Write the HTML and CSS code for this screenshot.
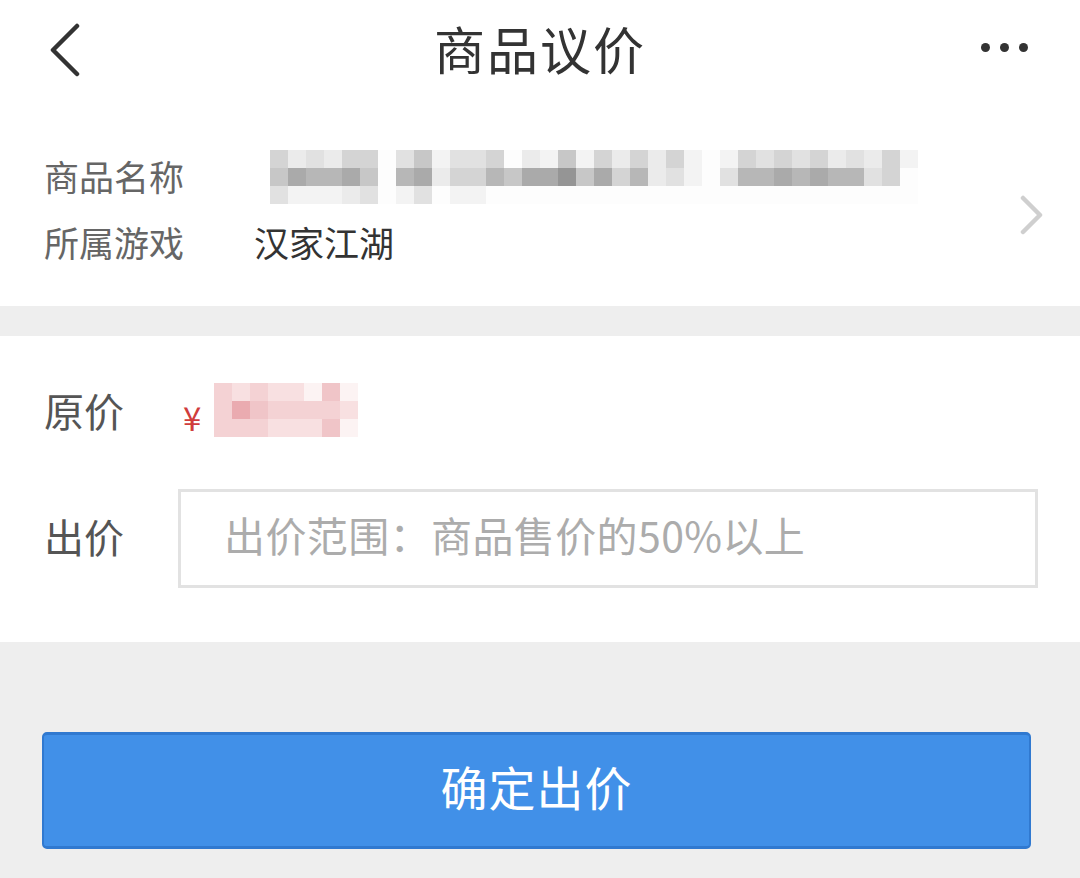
FILE: index.html
```html
<!DOCTYPE html>
<html lang="zh-CN">
<head>
<meta charset="utf-8">
<title>商品议价</title>
<link rel="stylesheet" href="styles.css">
</head>
<body>
<div class="page">
  <header class="topbar">
    <svg class="back" width="40" height="60" viewBox="0 0 40 60"><path d="M27 14 L3 38 L27 62" transform="translate(0,-8)" fill="none" stroke="#333" stroke-width="4.5" stroke-linecap="round" stroke-linejoin="round"/></svg>
    <h1 class="title">商品议价</h1>
    <div class="more"><span class="dot"></span><span class="dot"></span><span class="dot"></span></div>
  </header>

  <section class="goods">
    <div class="goods-info">
      <div class="row">
        <span class="label">商品名称</span>
        <div class="mosaic gray">
          <i class="d"></i><i class="b"></i><i class="c"></i><i class="b"></i><i class="d"></i><i class="d"></i><i class="w"></i><i class="c"></i><i class="e"></i><i class="a"></i><i class="c"></i><i class="c"></i><i class="d"></i><i class="w"></i><i class="b"></i><i class="a"></i><i class="e"></i><i class="a"></i><i class="d"></i><i class="b"></i><i class="d"></i><i class="b"></i><i class="d"></i><i class="a"></i><i class="w"></i><i class="a"></i><i class="d"></i><i class="c"></i><i class="d"></i><i class="c"></i><i class="d"></i><i class="b"></i><i class="c"></i><i class="b"></i><i class="d"></i><i class="a"></i>
          <i class="e"></i><i class="g"></i><i class="f"></i><i class="f"></i><i class="g"></i><i class="e"></i><i class="w"></i><i class="f"></i><i class="g"></i><i class="b"></i><i class="d"></i><i class="d"></i><i class="f"></i><i class="e"></i><i class="g"></i><i class="g"></i><i class="h"></i><i class="e"></i><i class="g"></i><i class="d"></i><i class="f"></i><i class="b"></i><i class="c"></i><i class="a"></i><i class="w"></i><i class="c"></i><i class="f"></i><i class="f"></i><i class="g"></i><i class="f"></i><i class="g"></i><i class="f"></i><i class="f"></i><i class="c"></i><i class="d"></i><i class="w"></i>
          <i class="c"></i><i class="a"></i><i class="a"></i><i class="a"></i><i class="b"></i><i class="c"></i><i class="w"></i><i class="a"></i><i class="c"></i><i class="w"></i><i class="a"></i><i class="a"></i><i class="w"></i><i class="w"></i><i class="w"></i><i class="w"></i><i class="w"></i><i class="w"></i><i class="w"></i><i class="w"></i><i class="w"></i><i class="w"></i><i class="w"></i><i class="w"></i><i class="w"></i><i class="w"></i><i class="w"></i><i class="w"></i><i class="w"></i><i class="w"></i><i class="w"></i><i class="w"></i><i class="w"></i><i class="w"></i><i class="w"></i><i class="w"></i>
        </div>
      </div>
      <div class="row">
        <span class="label">所属游戏</span>
        <span class="value">汉家江湖</span>
      </div>
    </div>
    <svg class="arrow" width="24" height="40" viewBox="0 0 24 40"><path d="M3 3 L20 20 L3 37" fill="none" stroke="#cfcfcf" stroke-width="4.5" stroke-linecap="round" stroke-linejoin="round"/></svg>
  </section>

  <section class="offer">
    <div class="price-row">
      <span class="big-label">原价</span>
      <span class="yen">¥</span>
      <div class="mosaic pink">
        <i class="p3"></i><i class="p2"></i><i class="p3"></i><i class="p2"></i><i class="p2"></i><i class="p1"></i><i class="p4"></i><i class="p1"></i>
        <i class="p3"></i><i class="p5"></i><i class="p4"></i><i class="p3"></i><i class="p3"></i><i class="p3"></i><i class="p3"></i><i class="p2"></i>
        <i class="p3"></i><i class="p3"></i><i class="p3"></i><i class="p2"></i><i class="p2"></i><i class="p2"></i><i class="p4"></i><i class="p1"></i>
      </div>
    </div>
    <div class="bid-row">
      <span class="big-label bid-label">出价</span>
      <input class="bid-input" type="text" placeholder="出价范围：商品售价的50%以上">
    </div>
  </section>

  <div class="footer">
    <button class="submit" type="button">确定出价</button>
  </div>
</div>
</body>
</html>
```
FILE: styles.css
```css
* { box-sizing: border-box; }
html, body { margin: 0; padding: 0; }
body {
  background: #eeeeee;
  font-family: "Noto Sans CJK SC", "Noto Sans", sans-serif;
  width: 1080px;
  height: 878px;
  overflow: hidden;
}
.page { display: flex; flex-direction: column; }

.topbar {
  height: 100px;
  background: #fff;
  display: flex;
  align-items: center;
  justify-content: space-between;
  padding: 0 52px 0 50px;
  position: relative;
}
.back { display: block; }
.title {
  position: absolute;
  left: 0; right: 0; top: 0;
  margin: 0;
  text-align: center;
  font-size: 51px;
  line-height: 96px;
  font-weight: 400;
  color: #333;
  letter-spacing: 2px;
  pointer-events: none;
}
.more { display: flex; gap: 10px; margin-top: -6px; }
.dot { width: 9px; height: 9px; border-radius: 50%; background: #333; display: block; }

.goods {
  background: #fff;
  height: 206px;
  display: flex;
  align-items: center;
  padding: 43px 36px 31px 44px;
}
.goods-info { flex: 1; display: flex; flex-direction: column; }
.row { height: 66px; display: flex; align-items: center; }
.label {
  width: 210px;
  font-size: 35px;
  line-height: 66px;
  color: #666;
  flex: none;
}
.value { font-size: 35px; line-height: 66px; color: #333; }
.arrow { display: block; margin-top: 12px; }

.mosaic { display: grid; }
.mosaic i { display: block; }
.gray {
  grid-template-columns: repeat(36, 18px);
  grid-auto-rows: 18px;
  margin-left: 16px;
  align-self: flex-start;
  margin-top: 7px;
}
.gray .w { background: #fdfdfd; }
.gray .a { background: #f3f3f3; }
.gray .b { background: #ebebeb; }
.gray .c { background: #e1e1e1; }
.gray .d { background: #d4d4d4; }
.gray .e { background: #c7c7c7; }
.gray .f { background: #b7b7b7; }
.gray .g { background: #aaaaaa; }
.gray .h { background: #959595; }

.offer {
  margin-top: 30px;
  background: #fff;
  height: 306px;
  padding: 34px 42px 0 44px;
  display: flex;
  flex-direction: column;
}
.price-row { height: 80px; display: flex; align-items: center; }
.big-label {
  width: 134px;
  flex: none;
  font-size: 40px;
  line-height: 60px;
  color: #555;
}
.bid-label { padding-bottom: 6px; }
.yen {
  font-size: 33px;
  color: #d03c3c;
  margin-left: 5px;
  padding-top: 14px;
  width: 27px;
}
.pink {
  grid-template-columns: repeat(8, 18px);
  grid-auto-rows: 18px;
  margin-left: 4px;
}
.pink .p1 { background: #fcf3f3; }
.pink .p2 { background: #f8e0e1; }
.pink .p3 { background: #f4d2d4; }
.pink .p4 { background: #f0c5c8; }
.pink .p5 { background: #eaabb0; }

.bid-row { margin-top: 39px; display: flex; align-items: center; }
.bid-input {
  width: 860px;
  height: 99px;
  border: 3px solid #e2e2e2;
  border-radius: 0;
  padding: 0 0 10px 43px;
  font-family: "Noto Sans CJK SC", "Noto Sans", sans-serif;
  font-size: 41px;
  letter-spacing: 0.4px;
  color: #333;
  background: #fff;
  outline: none;
}
.bid-input::placeholder { color: #acacac; }

.footer { padding: 90px 49px 0 42px; }
.submit {
  width: 100%;
  height: 117px;
  background: #4190e8;
  border: 2px solid #3079d0;
  border-top-width: 3px;
  border-bottom-width: 3px;
  border-radius: 5px;
  color: #fff;
  font-family: "Noto Sans CJK SC", "Noto Sans", sans-serif;
  font-size: 47px;
  letter-spacing: 1px;
  padding: 0 0 10px 0;
}
```
